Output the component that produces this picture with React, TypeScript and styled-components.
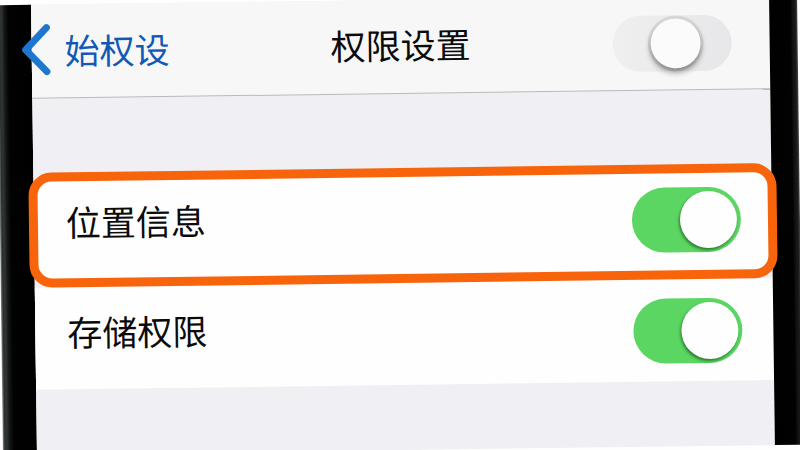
import React, { useState } from "react";
import styled, { createGlobalStyle } from "styled-components";

const GlobalStyle = createGlobalStyle`
  *, *::before { box-sizing: border-box; }
  body {
    margin: 0;
    overflow: hidden;
    background: #fefefe;
    color: #0b0b0b;
    font-family: "Noto Sans CJK SC", "Noto Sans", sans-serif;
  }
`;

const Phone = styled.div`
  display: grid;
  grid-template-columns: 34px minmax(0, 1fr) 28px;
  min-height: 100vh;
  transform: rotate(-0.75deg);
`;

const Bezel = styled.div<{ $side: "left" | "right" }>`
  background: ${({ $side }) =>
    $side === "left"
      ? "linear-gradient(to right, #8b8d8c 0, #2a2e2c 2px, #303533 4px, #141716 7px, #020202 11px, #000 100%)"
      : "linear-gradient(to left, #4a4a4a 0, #1b1b1b 2px, #111 5px, #020202 7px, #000 100%)"};
`;

const Screen = styled.main`
  display: flex;
  flex-direction: column;
  background: #efeff4;
`;

const Header = styled.header`
  display: grid;
  grid-template-columns: 1fr auto 1fr;
  align-items: center;
  height: 94px;
  background: #f7f7f7;
  border-bottom: 1px solid #b9b9bb;
`;

const BackButton = styled.button`
  position: relative;
  z-index: 1;
  justify-self: start;
  display: flex;
  align-items: center;
  gap: 14px;
  margin-left: -10px;
  padding: 0 0 4px;
  border: 0;
  background: none;
  color: #1259b5;
  font: inherit;
  font-size: 35px;
  line-height: 50px;
  cursor: pointer;
`;

const Title = styled.h1`
  margin: 0;
  padding-bottom: 6px;
  font-size: 35px;
  font-weight: 400;
  line-height: 50px;
`;

const HeaderAction = styled.div`
  display: flex;
  justify-content: flex-end;
  padding-right: 38px;
`;

const Settings = styled.section`
  display: flex;
  flex-direction: column;
  margin-top: 74px;
`;

const Row = styled.label<{ $highlighted?: boolean }>`
  display: flex;
  align-items: center;
  justify-content: space-between;
  background: #fefefe;
  cursor: pointer;
  ${({ $highlighted }) =>
    $highlighted
      ? `
    position: relative;
    z-index: 1;
    height: 115px;
    margin: 0 -5px;
    padding: 0 27px 4px 28px;
    border: 9px solid #f8640c;
    border-radius: 23px;
  `
      : `
    height: 102px;
    padding: 0 31px 0 32px;
  `}
`;

const RowLabel = styled.span`
  padding-bottom: 14px;
  font-size: 35px;
  line-height: 50px;
`;

const Switch = styled.input`
  appearance: none;
  flex: none;
  display: flex;
  align-items: center;
  width: 109px;
  height: 65px;
  margin: 0;
  padding-left: 4px;
  border-radius: 33px;
  background: #e5e5e8;
  cursor: pointer;

  &::before {
    content: "";
    width: 57px;
    height: 57px;
    border-radius: 50%;
    background: #fefefe;
    box-shadow: -1px 2px 3px rgba(0, 50, 10, 0.55);
  }

  &:checked {
    padding-left: 48px;
    background: #5bd662;
  }
`;

const HeaderSwitch = styled(Switch)`
  width: 119px;
  height: 56px;
  padding-left: 38px;
  background: linear-gradient(to right, #efeff0, #e7e7e9);

  &::before {
    width: 50px;
    height: 50px;
    background: #fbfbfb;
    box-shadow: 0 0 0 3px rgba(0, 0, 0, 0.07), 0 4px 6px rgba(0, 0, 0, 0.4);
  }

  &:checked {
    padding-left: 66px;
    background: #5bd662;
  }
`;

const ChevronLeft = () => (
  <svg width="29" height="52" viewBox="0 0 29 52" fill="none" aria-hidden="true">
    <path
      d="M25 4 L4 26 L25 48"
      stroke="#1e76cf"
      strokeWidth="7"
      strokeLinecap="round"
      strokeLinejoin="round"
    />
  </svg>
);

const permissions = [
  { id: "location", label: "位置信息", highlighted: true },
  { id: "storage", label: "存储权限", highlighted: false },
];

export default function App() {
  const [allEnabled, setAllEnabled] = useState(false);
  const [enabled, setEnabled] = useState<Record<string, boolean>>({
    location: true,
    storage: true,
  });

  return (
    <>
      <GlobalStyle />
      <Phone>
        <Bezel $side="left" />
        <Screen>
          <Header>
            <BackButton type="button">
              <ChevronLeft />
              始权设
            </BackButton>
            <Title>权限设置</Title>
            <HeaderAction>
              <HeaderSwitch
                type="checkbox"
                role="switch"
                aria-label="权限设置"
                checked={allEnabled}
                onChange={(event) => setAllEnabled(event.target.checked)}
              />
            </HeaderAction>
          </Header>
          <Settings>
            {permissions.map(({ id, label, highlighted }) => (
              <Row key={id} htmlFor={id} $highlighted={highlighted}>
                <RowLabel>{label}</RowLabel>
                <Switch
                  id={id}
                  type="checkbox"
                  role="switch"
                  checked={enabled[id]}
                  onChange={(event) =>
                    setEnabled({ ...enabled, [id]: event.target.checked })
                  }
                />
              </Row>
            ))}
          </Settings>
        </Screen>
        <Bezel $side="right" />
      </Phone>
    </>
  );
}
